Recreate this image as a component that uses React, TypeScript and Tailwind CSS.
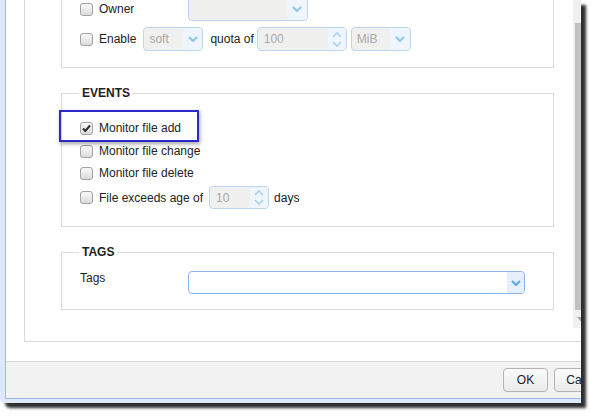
import React from "react";

function Chevron({ color = "#8cc6f0", w = 10, h = 6, sw = 2 }: { color?: string; w?: number; h?: number; sw?: number }) {
  return (
    <svg width={w} height={h} viewBox={`0 0 ${w} ${h}`}>
      <path d={`M1 1 L${w / 2} ${h - 1} L${w - 1} 1`} fill="none" stroke={color} strokeWidth={sw} />
    </svg>
  );
}

function CheckBox({ checked = false }: { checked?: boolean }) {
  return (
    <span className="flex h-[13px] w-[13px] shrink-0 items-center justify-center rounded-[3px] border border-[#a2a2a2] bg-linear-to-b from-[#f9f9f9] to-[#dcdcdc]">
      {checked && (
        <svg width="11" height="11" viewBox="0 0 11 11">
          <path d="M2 5.5 L4.3 8 L9 2.5" fill="none" stroke="#2b2b2b" strokeWidth="2" />
        </svg>
      )}
    </span>
  );
}

function DisabledSelect({ value, width, arrow = 19, className = "" }: { value: string; width: string; arrow?: number; className?: string }) {
  return (
    <div className={`flex h-[24px] overflow-hidden rounded-[4px] border border-[#bdd5f1] bg-[#f0f0ee] ${width} ${className}`}>
      <span className="flex flex-1 items-center pl-[5px] text-[#a8a8a8]">{value}</span>
      <span className="flex items-center justify-center bg-[#eef5fd]" style={{ width: arrow }}>
        <Chevron />
      </span>
    </div>
  );
}

function Spinner({ value, width, className = "" }: { value: string; width: string; className?: string }) {
  return (
    <div className={`flex h-[24px] overflow-hidden rounded-[4px] border border-[#bdd5f1] bg-[#f0f0ee] ${width} ${className}`}>
      <span className="flex flex-1 items-center pl-[6px] text-[#a8a8a8]">{value}</span>
      <span className="flex w-[18px] flex-col items-center justify-center gap-[3px] bg-[#eef5fd]">
        <svg width="10" height="6" viewBox="0 0 10 6">
          <path d="M1 5 L5 1 L9 5" fill="none" stroke="#a6d1f2" strokeWidth="1.6" />
        </svg>
        <svg width="10" height="6" viewBox="0 0 10 6">
          <path d="M1 1 L5 5 L9 1" fill="none" stroke="#a6d1f2" strokeWidth="1.6" />
        </svg>
      </span>
    </div>
  );
}

function CheckRow({ label, checked = false, className = "" }: { label: string; checked?: boolean; className?: string }) {
  return (
    <div className={`flex h-[22px] items-center gap-[6px] pl-[18px] ${className}`}>
      <CheckBox checked={checked} />
      <span>{label}</span>
    </div>
  );
}

export default function App() {
  return (
    <div className="relative h-[420px] w-[591px] overflow-hidden bg-white font-['Liberation_Sans',Arial,sans-serif] text-[12px] leading-4 text-[#222]">
      {/* dialog frame */}
      <div className="h-[403px] w-[581px] overflow-hidden rounded-bl-[5px] bg-[#dde8f8] pb-[4px] pl-[5px] shadow-[5px_5px_3px_rgba(0,0,0,0.82)]">
        <div className="flex h-[399px] w-[640px] flex-col border-b border-l border-[#9dbce8] bg-white">
          {/* content area */}
          <div className="h-[361px] pl-[18px]">
            <div className="flex h-[342px] border-b border-l border-[#d8d8d8]">
              {/* scroll content */}
              <div className="w-[548px] overflow-hidden pl-[36px]">
                <div className="-mt-[3px] flex flex-col">
                  {/* quota fieldset (scrolled partially) */}
                  <div className="w-[493px] border-x border-b border-[#dadada] pb-[16px]">
                    <div className="flex h-[24px] items-center pl-[18px]">
                      <div className="flex w-[108px] items-center gap-[6px]">
                        <CheckBox />
                        <span>Owner</span>
                      </div>
                      <DisabledSelect value="" width="w-[120px]" arrow={20} />
                    </div>
                    <div className="mt-[6px] flex h-[24px] items-center pl-[18px]">
                      <CheckBox />
                      <span className="ml-[6px]">Enable</span>
                      <DisabledSelect value="soft" width="w-[60px]" className="ml-[7px]" />
                      <span className="ml-[7px]">quota of</span>
                      <Spinner value="100" width="w-[90px]" className="ml-[3px]" />
                      <DisabledSelect value="MiB" width="w-[60px]" arrow={20} className="ml-[4px]" />
                    </div>
                  </div>

                  {/* EVENTS */}
                  <fieldset className="mt-[17px] w-[493px] border border-[#dadada] pb-[17px]">
                    <legend className="ml-[17px] px-[3px] font-bold leading-4">EVENTS</legend>
                    <div className="flex flex-col pt-[16px]">
                      <div className="relative">
                        <CheckRow label="Monitor file add" checked />
                        <div className="absolute left-[-3px] top-[-7px] h-[32px] w-[140px] border-[2.5px] border-[#2a2acb] shadow-[1px_2px_4px_rgba(0,0,0,0.35)]" />
                      </div>
                      <CheckRow label="Monitor file change" className="mt-[1px]" />
                      <CheckRow label="Monitor file delete" />
                      <div className="mt-[2px] flex h-[23px] items-center pl-[18px]">
                        <CheckBox />
                        <span className="ml-[6px]">File exceeds age of</span>
                        <Spinner value="10" width="w-[60px]" className="ml-[6px] !h-[23px]" />
                        <span className="ml-[5px]">days</span>
                      </div>
                    </div>
                  </fieldset>

                  {/* TAGS */}
                  <fieldset className="mt-[17px] w-[493px] border border-[#dadada] pb-[15px]">
                    <legend className="ml-[17px] px-[3px] font-bold leading-4">TAGS</legend>
                    <div className="flex items-start pl-[18px] pt-[11px]">
                      <span className="-mt-[1px] w-[108px]">Tags</span>
                      <div className="flex h-[23px] w-[337px] overflow-hidden rounded-[4px] border border-[#8db5eb] bg-white">
                        <span className="flex-1" />
                        <span className="flex w-[17px] items-center justify-center bg-[#e6f0fd]">
                          <Chevron color="#5aaae9" />
                        </span>
                      </div>
                    </div>
                  </fieldset>
                </div>
              </div>
              {/* scrollbar */}
              <div className="flex h-[328px] w-[17px] flex-col bg-[#f0f0f0]">
                <div className="h-[23px]" />
                <div className="ml-[2px] h-[287px] w-[13px] bg-[#c1c1c1]" />
                <div className="flex flex-1 items-center justify-center">
                  <svg width="9" height="5" viewBox="0 0 9 5">
                    <path d="M0 0 L9 0 L4.5 5 Z" fill="#a3a3a3" />
                  </svg>
                </div>
              </div>
            </div>
          </div>
          {/* footer */}
          <div className="flex h-[37px] gap-[6px] border-t border-[#d9d9d9] bg-[#f2f2f2] pl-[497px] pt-[6px]">
            <button className="flex h-[24px] w-[45px] items-center justify-center rounded-[4px] border border-[#b3b3b3] bg-linear-to-b from-[#fbfbfb] to-[#ebebeb] text-[12px] text-[#222]">
              OK
            </button>
            <button className="flex h-[24px] w-[62px] items-center justify-center rounded-[4px] border border-[#b3b3b3] bg-linear-to-b from-[#fbfbfb] to-[#ebebeb] text-[12px] text-[#222]">
              Cancel
            </button>
          </div>
        </div>
      </div>
    </div>
  );
}
